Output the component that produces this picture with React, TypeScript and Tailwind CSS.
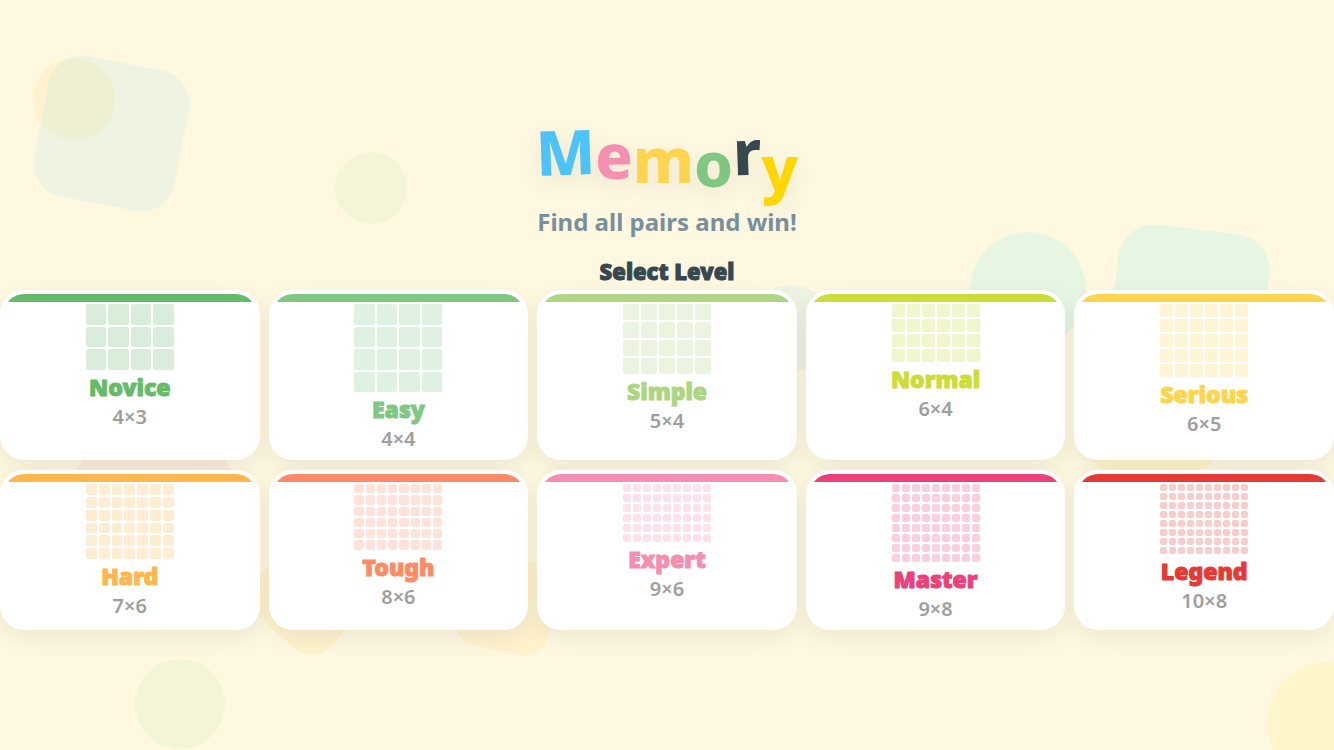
type Level = {
  name: string;
  cols: number;
  rows: number;
  text: string;
  fill: string;
};

const LEVELS: Level[] = [
  { name: "Novice", cols: 4, rows: 3, text: "text-[#66bb6a]", fill: "bg-[#66bb6a]" },
  { name: "Easy", cols: 4, rows: 4, text: "text-[#81c784]", fill: "bg-[#81c784]" },
  { name: "Simple", cols: 5, rows: 4, text: "text-[#aed581]", fill: "bg-[#aed581]" },
  { name: "Normal", cols: 6, rows: 4, text: "text-[#cddc39]", fill: "bg-[#cddc39]" },
  { name: "Serious", cols: 6, rows: 5, text: "text-[#ffd54f]", fill: "bg-[#ffd54f]" },
  { name: "Hard", cols: 7, rows: 6, text: "text-[#ffb74d]", fill: "bg-[#ffb74d]" },
  { name: "Tough", cols: 8, rows: 6, text: "text-[#ff8a65]", fill: "bg-[#ff8a65]" },
  { name: "Expert", cols: 9, rows: 6, text: "text-[#f48fb1]", fill: "bg-[#f48fb1]" },
  { name: "Master", cols: 9, rows: 8, text: "text-[#ec407a]", fill: "bg-[#ec407a]" },
  { name: "Legend", cols: 10, rows: 8, text: "text-[#e53935]", fill: "bg-[#e53935]" },
];

const LETTERS = [
  { char: "M", style: "text-[#4fc3f7] -translate-y-2 -rotate-2" },
  { char: "e", style: "text-[#f48fb1] -translate-y-1 -rotate-1" },
  { char: "m", style: "text-[#ffd54f]" },
  { char: "o", style: "text-[#81c784] translate-y-1" },
  { char: "r", style: "text-[#37474f] -translate-y-2 -rotate-2" },
  { char: "y", style: "text-[#ffd600] translate-y-2" },
];

const SHAPES = [
  "left-[33px] top-[58px] size-[82px] rounded-full bg-[#ffc84f]/12",
  "left-[40px] top-[62px] size-[143px] rounded-[34px] rotate-11 bg-[#4fd0f0]/9",
  "left-[335px] top-[152px] size-[72px] rounded-full bg-[#81d094]/9",
  "left-[970px] top-[232px] size-[116px] rounded-full bg-[#58ecea]/14",
  "left-[1113px] top-[229px] size-[152px] rounded-[36px] rotate-7 bg-[#58ecea]/14",
  "left-[748px] top-[285px] size-[86px] rounded-full bg-[#4fd0f0]/9",
  "left-[67px] top-[423px] size-[174px] rounded-full bg-[#f48fb1]/10",
  "left-[1081px] top-[347px] size-[144px] rounded-full bg-[#ffd600]/10",
  "left-[260px] top-[545px] size-[100px] rounded-[25px] rotate-42 bg-[#ffc84f]/13",
  "left-[460px] top-[557px] size-[94px] rounded-[23px] rotate-12 bg-[#ffc84f]/13",
  "left-[135px] top-[659px] size-[90px] rounded-full bg-[#81d094]/9",
  "left-[1267px] top-[662px] size-[120px] rounded-full bg-[#ffd600]/10",
];

function LevelCard({ level }: { level: Level }) {
  return (
    <button
      type="button"
      className="relative flex cursor-pointer flex-col items-center overflow-hidden rounded-3xl border-4 border-white bg-white pt-2.5 pb-1 shadow-[0_8px_24px_rgba(0,0,0,0.07)]"
    >
      <span className={`absolute inset-x-0 top-0 h-2 ${level.fill}`} />
      <span
        className="grid w-[88px] gap-0.5"
        style={{ gridTemplateColumns: `repeat(${level.cols}, 1fr)` }}
      >
        {Array.from({ length: level.cols * level.rows }, (_, i) => (
          <span key={i} className={`aspect-square rounded-[2px] opacity-25 ${level.fill}`} />
        ))}
      </span>
      <span
        className={`text-[23px] leading-[34px] font-black [-webkit-text-stroke:1px_currentColor] ${level.text}`}
      >
        {level.name}
      </span>
      <span className="text-xl leading-[26px] font-semibold text-[#9e9e9e]">
        {level.cols}×{level.rows}
      </span>
    </button>
  );
}

export default function App() {
  return (
    <div className="relative isolate flex min-h-screen flex-col justify-center overflow-hidden bg-[#fff8e1] font-['Noto_Sans',sans-serif]">
      <div aria-hidden="true" className="absolute inset-0 -z-10">
        {SHAPES.map((shape) => (
          <div key={shape} className={`absolute ${shape}`} />
        ))}
      </div>

      <header className="flex flex-col items-center">
        <h1
          aria-label="Memory"
          className="flex text-[62px] leading-[78px] font-extrabold [text-shadow:0_8px_24px_rgba(0,0,0,0.08)]"
        >
          {LETTERS.map((letter) => (
            <span key={letter.char} className={`inline-block ${letter.style}`}>
              {letter.char}
            </span>
          ))}
        </h1>
        <p className="text-2xl leading-[48px] font-bold text-[#78909c]">Find all pairs and win!</p>
      </header>

      <main className="flex flex-col">
        <h2 className="pt-1.5 text-center text-[22px] leading-[38px] font-black text-[#37474f] [-webkit-text-stroke:1px_currentColor]">
          Select Level
        </h2>
        <div className="grid grid-cols-5 gap-x-[9px] gap-y-2.5">
          {LEVELS.map((level) => (
            <LevelCard key={level.name} level={level} />
          ))}
        </div>
      </main>
    </div>
  );
}
